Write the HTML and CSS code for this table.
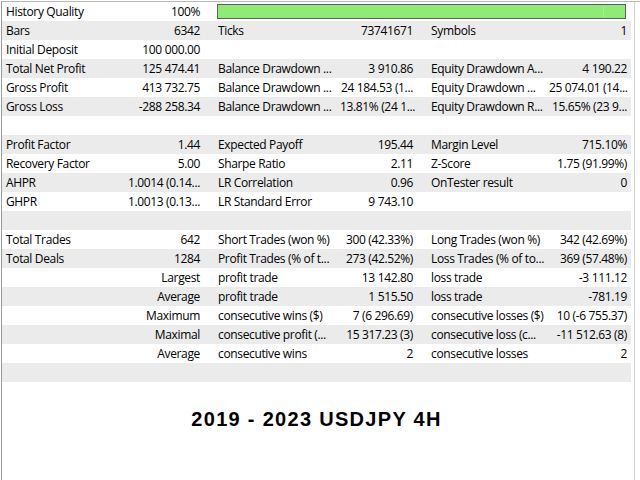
FILE: index.html
```html
<!DOCTYPE html>
<html>
<head>
<meta charset="utf-8">
<link rel="stylesheet" href="styles.css">
</head>
<body>
<div class="frame">
  <div class="main">
    <div class="report">
      <div class="row">
        <div class="lab first">History Quality</div><div class="val">100%</div>
        <div class="barcell"><div class="bar"></div></div>
      </div>
      <div class="row alt">
        <div class="lab first">Bars</div><div class="val">6342</div>
        <div class="lab">Ticks</div><div class="val">73741671</div>
        <div class="lab">Symbols</div><div class="val">1</div>
      </div>
      <div class="row">
        <div class="lab first">Initial Deposit</div><div class="val">100 000.00</div>
        <div class="lab"></div><div class="val"></div>
        <div class="lab"></div><div class="val"></div>
      </div>
      <div class="row alt">
        <div class="lab first">Total Net Profit</div><div class="val">125 474.41</div>
        <div class="lab">Balance Drawdown ...</div><div class="val">3 910.86</div>
        <div class="lab">Equity Drawdown A...</div><div class="val">4 190.22</div>
      </div>
      <div class="row">
        <div class="lab first">Gross Profit</div><div class="val">413 732.75</div>
        <div class="lab">Balance Drawdown ...</div><div class="val">24 184.53 (1...</div>
        <div class="lab">Equity Drawdown ...</div><div class="val">25 074.01 (14...</div>
      </div>
      <div class="row alt">
        <div class="lab first">Gross Loss</div><div class="val">-288 258.34</div>
        <div class="lab">Balance Drawdown ...</div><div class="val">13.81% (24 1...</div>
        <div class="lab">Equity Drawdown R...</div><div class="val">15.65% (23 9...</div>
      </div>
      <div class="row"></div>
      <div class="row alt">
        <div class="lab first">Profit Factor</div><div class="val">1.44</div>
        <div class="lab">Expected Payoff</div><div class="val">195.44</div>
        <div class="lab">Margin Level</div><div class="val">715.10%</div>
      </div>
      <div class="row">
        <div class="lab first">Recovery Factor</div><div class="val">5.00</div>
        <div class="lab">Sharpe Ratio</div><div class="val">2.11</div>
        <div class="lab">Z-Score</div><div class="val">1.75 (91.99%)</div>
      </div>
      <div class="row alt">
        <div class="lab first">AHPR</div><div class="val">1.0014 (0.14...</div>
        <div class="lab">LR Correlation</div><div class="val">0.96</div>
        <div class="lab">OnTester result</div><div class="val">0</div>
      </div>
      <div class="row">
        <div class="lab first">GHPR</div><div class="val">1.0013 (0.13...</div>
        <div class="lab">LR Standard Error</div><div class="val">9 743.10</div>
        <div class="lab"></div><div class="val"></div>
      </div>
      <div class="row alt"></div>
      <div class="row">
        <div class="lab first">Total Trades</div><div class="val">642</div>
        <div class="lab">Short Trades (won %)</div><div class="val">300 (42.33%)</div>
        <div class="lab">Long Trades (won %)</div><div class="val">342 (42.69%)</div>
      </div>
      <div class="row alt">
        <div class="lab first">Total Deals</div><div class="val">1284</div>
        <div class="lab">Profit Trades (% of t...</div><div class="val">273 (42.52%)</div>
        <div class="lab">Loss Trades (% of to...</div><div class="val">369 (57.48%)</div>
      </div>
      <div class="row">
        <div class="lab first"></div><div class="val">Largest</div>
        <div class="lab">profit trade</div><div class="val">13 142.80</div>
        <div class="lab">loss trade</div><div class="val">-3 111.12</div>
      </div>
      <div class="row alt">
        <div class="lab first"></div><div class="val">Average</div>
        <div class="lab">profit trade</div><div class="val">1 515.50</div>
        <div class="lab">loss trade</div><div class="val">-781.19</div>
      </div>
      <div class="row">
        <div class="lab first"></div><div class="val">Maximum</div>
        <div class="lab">consecutive wins ($)</div><div class="val">7 (6 296.69)</div>
        <div class="lab">consecutive losses ($)</div><div class="val">10 (-6 755.37)</div>
      </div>
      <div class="row alt">
        <div class="lab first"></div><div class="val">Maximal</div>
        <div class="lab">consecutive profit (...</div><div class="val">15 317.23 (3)</div>
        <div class="lab">consecutive loss (c...</div><div class="val">-11 512.63 (8)</div>
      </div>
      <div class="row">
        <div class="lab first"></div><div class="val">Average</div>
        <div class="lab">consecutive wins</div><div class="val">2</div>
        <div class="lab">consecutive losses</div><div class="val">2</div>
      </div>
      <div class="row alt"></div>
    </div>
    <div class="title">2019 - 2023 USDJPY 4H</div>
  </div>
  <div class="scroll"></div>
</div>
</body>
</html>
```

FILE: styles.css
```css
html, body {
  margin: 0;
  padding: 0;
  background: #fff;
}
body {
  font-family: "Open Sans", "Noto Sans", sans-serif;
  font-size: 12px;
  letter-spacing: -0.35px;
  color: #000;
  width: 640px;
  height: 480px;
  overflow: hidden;
}
.frame {
  margin: 1px 0 0 1px;
  border-top: 1px solid #b9b9b9;
  border-left: 1px solid #9a9a9a;
  height: 478px;
  display: flex;
}
.main {
  width: 629px;
  display: flex;
  flex-direction: column;
}
.report {
  display: flex;
  flex-direction: column;
}
.row {
  display: grid;
  grid-template-columns: 110px 92px 136px 77px 132px 82px;
  height: 19px;
  line-height: 19px;
  background: #fff;
}
.row.alt {
  background: #ebebeb;
}
.lab {
  padding-left: 14px;
  white-space: nowrap;
}
.lab.first {
  padding-left: 4px;
}
.val {
  padding-right: 4px;
  text-align: right;
  white-space: nowrap;
}
.barcell {
  grid-column: 3 / 7;
  padding: 2px 5px 2px 13px;
}
.bar {
  height: 13px;
  border: 1px solid #5f5f5f;
  background: linear-gradient(to right, #90ea78 0, #90ea78 385px, #a8e898 385px, #a8e898 386px, #90ea78 386px);
}
.title {
  margin-top: 25px;
  text-align: center;
  font-family: "Liberation Sans", Arial, sans-serif;
  font-weight: bold;
  font-size: 20px;
  letter-spacing: 1.3px;
  line-height: 24px;
}
.scroll {
  margin-left: 3px;
  width: 1px;
  background: #d4d4d4;
}
```
